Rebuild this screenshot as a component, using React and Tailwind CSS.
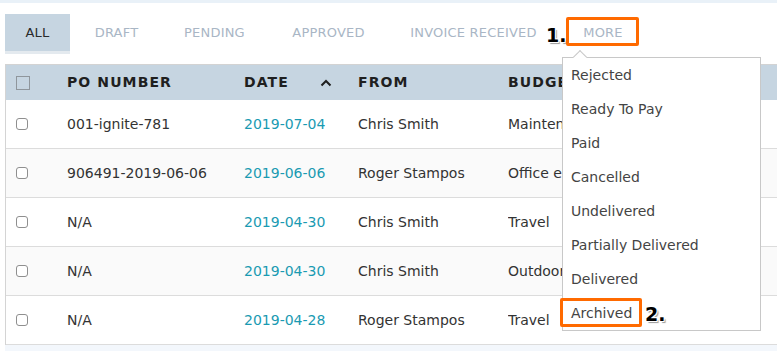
import React from 'react';

const tabs = [
  { label: 'ALL', w: 'w-[65px]', active: true },
  { label: 'DRAFT', w: 'w-[93px]' },
  { label: 'PENDING', w: 'w-[103px]' },
  { label: 'APPROVED', w: 'w-[125px]' },
  { label: 'INVOICE RECEIVED', w: 'w-[165px]' },
  { label: 'MORE', w: 'w-[94px]' },
];

const rows = [
  { po: '001-ignite-781', date: '2019-07-04', from: 'Chris Smith', budget: 'Maintenance' },
  { po: '906491-2019-06-06', date: '2019-06-06', from: 'Roger Stampos', budget: 'Office equipment' },
  { po: 'N/A', date: '2019-04-30', from: 'Chris Smith', budget: 'Travel' },
  { po: 'N/A', date: '2019-04-30', from: 'Chris Smith', budget: 'Outdoor' },
  { po: 'N/A', date: '2019-04-28', from: 'Roger Stampos', budget: 'Travel' },
];

const statuses = [
  'Rejected',
  'Ready To Pay',
  'Paid',
  'Cancelled',
  'Undelivered',
  'Partially Delivered',
  'Delivered',
  'Archived',
];

const haloText = '[text-shadow:1px_1px_0_#fff,-1px_-1px_0_#fff,1px_-1px_0_#fff,-1px_1px_0_#fff,2px_2px_1px_#9a9a9a]';

function ChevronUp() {
  return (
    <svg width="12" height="8" viewBox="0 0 12 8" fill="none">
      <path d="M1.5 6.5L6 2l4.5 4.5" stroke="#1f1f1f" strokeWidth="2" />
    </svg>
  );
}

export default function App() {
  return (
    <div className="relative w-[777px] h-[351px] overflow-hidden bg-white font-['DejaVu_Sans',sans-serif] text-[#333]">
      <div className="h-[3px] bg-[#e9f1f8]" />

      {/* status tabs */}
      <div className="mt-[11px] pl-[5px] flex">
        {tabs.map((t) => (
          <div key={t.label} className={`${t.w} h-[40px] flex flex-col`}>
            <div
              className={`h-[37px] flex items-center justify-center text-[13px] tracking-[0.2px] ${
                t.active ? 'bg-[#c6d5e1] text-[#2a2a2a]' : 'text-[#a9b6c5]'
              }`}
            >
              {t.label}
            </div>
            <div className={`h-[3px] ${t.active ? 'bg-[#e4eaef]' : ''}`} />
          </div>
        ))}
      </div>

      {/* table */}
      <div className="mt-[10px] ml-[5px] border-l border-[#d4d4d4]">
        <div className="h-[36px] flex items-center bg-[#c6d5e1] border-t border-[#d3d3d3] text-[14px] font-bold tracking-[1.1px] text-[#1f1f1f]">
          <div className="w-[61px] pl-[10px]">
            <div className="w-[14px] h-[14px] border border-[#8f969c]" />
          </div>
          <div className="w-[177px]">PO NUMBER</div>
          <div className="w-[114px] flex items-center pr-[26px]">
            <span>DATE</span>
            <span className="ml-auto">
              <ChevronUp />
            </span>
          </div>
          <div className="w-[150px]">FROM</div>
          <div>BUDGET</div>
        </div>
        {rows.map((r, i) => (
          <div
            key={i}
            className={`h-[49px] flex items-center border-b border-[#dcdcdc] text-[14px] whitespace-nowrap ${
              i % 2 === 1 ? 'bg-[#fafafa]' : 'bg-white'
            }`}
          >
            <div className="w-[61px] pl-[10px]">
              <div className="w-[12px] h-[12px] rounded-[3px] border border-[#8f8f8f] bg-white" />
            </div>
            <div className="w-[177px]">{r.po}</div>
            <div className="w-[114px] text-[#1a9ab2]">{r.date}</div>
            <div className="w-[150px]">{r.from}</div>
            {/* budget is partly hidden behind the open dropdown */}
            <div className="w-[54px] overflow-hidden">{r.budget}</div>
          </div>
        ))}
      </div>
      <div className="ml-[5px] h-[10px] bg-[#f3f7fc]" />

      {/* annotation 1 */}
      <div className={`absolute left-[546px] top-[21px] text-[19px] font-bold text-black ${haloText}`}>1.</div>
      <div className="absolute left-[566px] top-[17px] w-[73px] h-[29px] border-[3px] border-[#ff6a00] rounded-[2px]" />

      {/* more dropdown */}
      <div className="absolute left-[562px] top-[57px] w-[199px] border border-[#c8c8c8] bg-white">
        <div className="absolute left-[12px] -top-[6px] w-[10px] h-[10px] rotate-45 bg-white border-l border-t border-[#c8c8c8]" />
        {statuses.map((s) => (
          <div key={s} className="relative h-[34px] flex items-center pl-[8px] text-[14px] text-[#444]">
            {s}
          </div>
        ))}
      </div>

      {/* annotation 2 */}
      <div className="absolute left-[560px] top-[298px] w-[82px] h-[29px] border-[3px] border-[#ff6a00] rounded-[2px]" />
      <div className={`absolute left-[645px] top-[300px] text-[19px] font-bold text-black ${haloText}`}>2.</div>
    </div>
  );
}
